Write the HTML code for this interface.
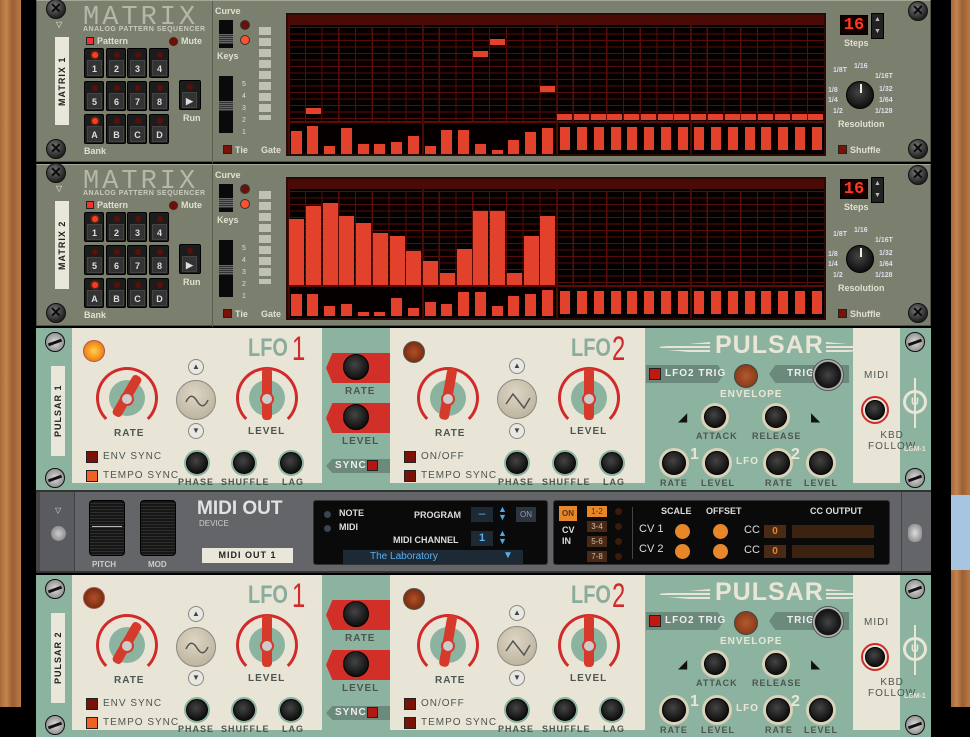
<!DOCTYPE html>
<html><head><meta charset="utf-8"><style>
*{margin:0;padding:0;box-sizing:border-box}
body{width:970px;height:707px;overflow:hidden;background:#000;font-family:"Liberation Sans",sans-serif;position:relative}
.a{position:absolute}
.wood{background:linear-gradient(90deg,#a8693a,#c3844f 30%,#9c5f33 60%,#b87a47)}
.mx{position:absolute;left:36px;width:895px;height:162px;background:#7b7f6e;border:1px solid #50534a;border-top-color:#a3a793}
.screw{position:absolute;width:20px;height:20px;border-radius:50%;background:radial-gradient(circle at 40% 35%,#777,#222 70%);border:1px solid #111}
.screw:after{content:"✕";position:absolute;left:3px;top:0;color:#0a0a0a;font-size:14px;font-weight:bold}
.sl:after{content:"";position:absolute;left:2px;top:8px;width:14px;height:3px;background:#111;transform:rotate(-20deg)}
.lbl{position:absolute;background:#e9e6da;color:#222;font-size:9px;font-weight:bold;letter-spacing:1px;writing-mode:vertical-rl;transform:rotate(180deg);text-align:center}
.t{position:absolute;color:#e0e0d0;font-weight:bold;font-size:9px;white-space:nowrap}
.btn{position:absolute;width:20px;height:30px;background:#1c1c1c;border:1px solid #000;border-radius:2px}
.btn i{position:absolute;left:7px;top:3px;width:6px;height:6px;border-radius:50%;background:#5a1008}
.btn i.on{background:#ff3a20;box-shadow:0 0 3px #f50}
.btn b{position:absolute;left:2px;top:11px;width:15px;height:16px;background:#333;color:#ddd;font-size:9px;text-align:center;line-height:16px;border:1px solid #444}
.grid{position:absolute;left:249px;top:12px;width:540px;height:143px;background:#050000;border:2px solid #2a0a08}
.knob{position:absolute;border-radius:50%;background:radial-gradient(circle at 45% 40%,#444,#111 70%);border:1px solid #000}
.pu{position:absolute;left:36px;width:895px;height:162px;background:#e9e5d6;overflow:hidden}
.gr{position:absolute;background:#8cb3a0}
.pt{position:absolute;color:#4d5550;font-size:10px;font-weight:bold;letter-spacing:1px;white-space:nowrap}
.sq{position:absolute;width:12px;height:12px;border:1px solid #222;background:#7a1208}
.lfo{position:absolute;top:6px;font-size:25px;font-weight:bold;color:#8bab9c;transform:scaleX(.8);transform-origin:left}
.num{position:absolute;top:2px;font-size:34px;color:#d02a2a;transform:scaleX(.7);transform-origin:left}
</style></head><body>
<div class="a wood" style="left:0;top:0;width:21px;height:707px"></div>
<div class="a wood" style="left:951px;top:0;width:19px;height:707px"></div>

<!-- MATRIX 1 -->
<div class="mx" id="m1" style="top:0">
 <div class="screw" style="left:9px;top:-2px"></div><div class="screw" style="left:9px;top:138px"></div>
 <div class="a" style="left:19px;top:19px;color:#eee;font-size:8px">▽</div>
 <div class="lbl" style="left:18px;top:36px;width:14px;height:88px;line-height:14px">MATRIX 1</div>
 <div class="a" style="left:175px;top:0;width:1px;height:162px;background:#5a5e50"></div>
 <div class="t" style="left:46px;top:2px;font-size:27px;letter-spacing:3px;color:#b5b8a6;font-family:'Liberation Mono',monospace;font-weight:normal">MATRIX</div>
 <div class="t" style="left:46px;top:25px;font-size:7px;color:#c9cbbd;letter-spacing:.5px">ANALOG PATTERN SEQUENCER</div>
 <div class="sq" style="left:49px;top:36px;width:8px;height:8px;background:#e33"></div>
 <div class="t" style="left:60px;top:35px">Pattern</div>
 <div class="a" style="left:132px;top:36px;width:9px;height:9px;border-radius:50%;background:#6a120a"></div>
 <div class="t" style="left:144px;top:35px">Mute</div>
 <div class="btn" style="left:47px;top:47px"><i class="on"></i><b>1</b></div>
 <div class="btn" style="left:69px;top:47px"><i></i><b>2</b></div>
 <div class="btn" style="left:90px;top:47px"><i></i><b>3</b></div>
 <div class="btn" style="left:112px;top:47px"><i></i><b>4</b></div>
 <div class="btn" style="left:47px;top:80px"><i></i><b>5</b></div>
 <div class="btn" style="left:69px;top:80px"><i></i><b>6</b></div>
 <div class="btn" style="left:90px;top:80px"><i></i><b>7</b></div>
 <div class="btn" style="left:112px;top:80px"><i></i><b>8</b></div>
 <div class="btn" style="left:47px;top:113px"><i class="on"></i><b>A</b></div>
 <div class="btn" style="left:69px;top:113px"><i></i><b>B</b></div>
 <div class="btn" style="left:90px;top:113px"><i></i><b>C</b></div>
 <div class="btn" style="left:112px;top:113px"><i></i><b>D</b></div>
 <div class="btn" style="left:142px;top:79px;width:22px"><i></i><b>▶</b></div>
 <div class="t" style="left:146px;top:112px">Run</div>
 <div class="t" style="left:47px;top:145px">Bank</div>
 <div class="t" style="left:178px;top:5px">Curve</div>
 <div class="a" style="left:182px;top:19px;width:14px;height:28px;background:#0a0a0a"><div class="a" style="left:0;top:14px;width:14px;height:10px;background:repeating-linear-gradient(#666 0 1px,#333 1px 2px)"></div></div>
 <div class="a" style="left:203px;top:19px;width:10px;height:10px;border-radius:50%;background:#6a120a;border:1px solid #333"></div>
 <div class="a" style="left:203px;top:34px;width:10px;height:10px;border-radius:50%;background:#ff5030;border:1px solid #333"></div>
 <div class="t" style="left:180px;top:50px">Keys</div>
 <div class="a" style="left:182px;top:75px;width:14px;height:57px;background:#0a0a0a"><div class="a" style="left:0;top:25px;width:14px;height:10px;background:repeating-linear-gradient(#666 0 1px,#333 1px 2px)"></div></div>
 <div class="a" style="left:200px;top:78px;font-size:7px;line-height:12px;color:#ddd;width:14px;text-align:center">5<br>4<br>3<br>2<br>1</div>
 <div class="a" style="left:222px;top:26px;width:12px;height:93px;background:repeating-linear-gradient(#bfc2b0 0 8px,transparent 8px 11px)"></div>
 <div class="sq" style="left:186px;top:144px;width:9px;height:9px"></div>
 <div class="t" style="left:198px;top:144px">Tie</div>
 <div class="t" style="left:224px;top:144px">Gate</div>
 <div class="grid"></div>
 <div class="a" style="left:803px;top:14px;width:28px;height:20px;background:#150000;border:1px solid #000;color:#ff3a20;font-family:'Liberation Mono',monospace;font-size:17px;font-weight:bold;text-align:center;line-height:19px">16</div>
 <div class="a" style="left:834px;top:12px;width:13px;height:26px;background:#222;border:1px solid #000;color:#bbb;font-size:7px;text-align:center;line-height:12px">▲<br>▼</div>
 <div class="t" style="left:807px;top:37px">Steps</div>
 <div class="t" style="left:796px;top:66px;font-size:7px;color:#dde">1/8T</div>
 <div class="t" style="left:817px;top:62px;font-size:7px;color:#dde">1/16</div>
 <div class="t" style="left:838px;top:72px;font-size:7px;color:#dde">1/16T</div>
 <div class="t" style="left:791px;top:86px;font-size:7px;color:#dde">1/8</div>
 <div class="t" style="left:791px;top:96px;font-size:7px;color:#dde">1/4</div>
 <div class="t" style="left:796px;top:107px;font-size:7px;color:#dde">1/2</div>
 <div class="t" style="left:842px;top:85px;font-size:7px;color:#dde">1/32</div>
 <div class="t" style="left:842px;top:96px;font-size:7px;color:#dde">1/64</div>
 <div class="t" style="left:838px;top:107px;font-size:7px;color:#dde">1/128</div>
 <div class="knob" style="left:809px;top:80px;width:28px;height:28px"><div class="a" style="left:13px;top:2px;width:2px;height:9px;background:#eed"></div></div>
 <div class="t" style="left:801px;top:118px">Resolution</div>
 <div class="sq" style="left:801px;top:144px;width:9px;height:9px"></div>
 <div class="t" style="left:813px;top:144px">Shuffle</div>
 <div class="screw" style="left:871px;top:0px"></div><div class="screw" style="left:871px;top:138px"></div>
</div>

<!-- PULSAR 1 -->
<div class="pu" id="p1" style="top:328px">
 <div class="gr" style="left:0;top:0;width:36px;height:162px"></div>
 <div class="gr" style="left:286px;top:0;width:68px;height:162px"></div>
 <div class="gr" style="left:609px;top:0;width:208px;height:162px"></div>
 <div class="gr" style="left:864px;top:0;width:31px;height:162px"></div>
 <div class="a" style="left:0;top:155px;width:895px;height:7px;background:#8cb3a0"></div>
 <div class="screw sl" style="left:9px;top:4px;background:radial-gradient(#ddd,#777)"></div>
 <div class="screw sl" style="left:9px;top:140px;background:radial-gradient(#ddd,#777)"></div>
 <div class="lbl" style="left:15px;top:38px;width:14px;height:90px;line-height:14px">PULSAR 1</div>
 <div class="a led" style="left:47px;top:12px;width:22px;height:22px;border-radius:50%;background:radial-gradient(#ffd050,#f08010 70%);border:1px solid #a55"></div>
 <div class="lfo" style="left:212px">LFO</div>
 <div class="num" style="left:256px">1</div>
 <div class="a" style="left:60px;top:39px;width:62px;height:62px;border-radius:50%;border:3px solid #d02a2a;border-bottom-color:transparent"></div>
 <div class="a" style="left:73px;top:52px;width:36px;height:36px;border-radius:50%;background:#8cb3a0"></div>
 <div class="a" style="left:86px;top:45px;width:10px;height:46px;background:#d63a2a;border-radius:4px;transform:rotate(30deg)"></div>
 <div class="a" style="left:84px;top:64px;width:14px;height:14px;border-radius:50%;background:#ccc;border:2px solid #d63a2a"></div>
 <div class="pt" style="left:78px;top:100px">RATE</div>
 <div class="a" style="left:200px;top:39px;width:62px;height:62px;border-radius:50%;border:3px solid #d02a2a;border-bottom-color:transparent"></div>
 <div class="a" style="left:213px;top:52px;width:36px;height:36px;border-radius:50%;background:#8cb3a0"></div>
 <div class="a" style="left:226px;top:40px;width:10px;height:52px;background:#d63a2a;border-radius:4px"></div>
 <div class="a" style="left:224px;top:64px;width:14px;height:14px;border-radius:50%;background:#ccc;border:2px solid #d63a2a"></div>
 <div class="pt" style="left:212px;top:98px">LEVEL</div>
 <div class="a" style="left:152px;top:31px;width:16px;height:16px;border-radius:50%;background:#e8e8e2;border:1px solid #888;font-size:8px;text-align:center;line-height:14px;color:#444">▲</div>
 <div class="a" style="left:140px;top:52px;width:40px;height:40px;border-radius:50%;background:radial-gradient(circle at 45% 35%,#ddd6c4,#b5ab95);border:1px solid #888"><svg width="40" height="40" class="a"><path d="M9 21 Q14 10 20 20 T31 19" stroke="#555" fill="none" stroke-width="1.5"/></svg></div>
 <div class="a" style="left:152px;top:95px;width:16px;height:16px;border-radius:50%;background:#e8e8e2;border:1px solid #888;font-size:8px;text-align:center;line-height:14px;color:#444">▼</div>
 <div class="sq" style="left:50px;top:123px"></div><div class="pt" style="left:67px;top:123px;font-weight:normal">ENV SYNC</div>
 <div class="sq" style="left:50px;top:142px;background:#f06020"></div><div class="pt" style="left:67px;top:142px;font-weight:normal">TEMPO SYNC</div>
 <div class="knob" style="left:150px;top:124px;width:22px;height:22px;box-shadow:0 0 0 2px #8cb3a0"></div><div class="pt" style="left:142px;top:149px;font-size:9px">PHASE</div>
 <div class="knob" style="left:197px;top:124px;width:22px;height:22px;box-shadow:0 0 0 2px #8cb3a0"></div><div class="pt" style="left:185px;top:149px;font-size:9px">SHUFFLE</div>
 <div class="knob" style="left:244px;top:124px;width:22px;height:22px;box-shadow:0 0 0 2px #8cb3a0"></div><div class="pt" style="left:246px;top:149px;font-size:9px">LAG</div>
 <div class="a" style="left:290px;top:25px;width:64px;height:30px;background:#d12f28;clip-path:polygon(10% 0,100% 0,100% 100%,10% 100%,0 50%)"></div>
 <div class="knob" style="left:307px;top:26px;width:26px;height:26px"></div>
 <div class="pt" style="left:309px;top:58px">RATE</div>
 <div class="a" style="left:290px;top:75px;width:64px;height:30px;background:#d12f28;clip-path:polygon(10% 0,100% 0,100% 100%,10% 100%,0 50%)"></div>
 <div class="knob" style="left:307px;top:76px;width:26px;height:26px"></div>
 <div class="pt" style="left:306px;top:108px">LEVEL</div>
 <div class="a" style="left:290px;top:131px;width:64px;height:14px;background:#6b8a7c;clip-path:polygon(10% 0,100% 0,100% 100%,10% 100%,0 50%)"></div>
 <div class="pt" style="left:299px;top:132px;color:#eee">SYNC</div>
 <div class="sq" style="left:331px;top:132px;width:11px;height:11px;background:#b01810"></div>
 <!-- LFO2 -->
 <div class="a" style="left:367px;top:13px;width:22px;height:22px;border-radius:50%;background:radial-gradient(#b0502a,#7a2e10 70%);border:1px solid #555"></div>
 <div class="lfo" style="left:535px">LFO</div>
 <div class="num" style="left:576px">2</div>
 <div class="a" style="left:381px;top:39px;width:62px;height:62px;border-radius:50%;border:3px solid #d02a2a;border-bottom-color:transparent"></div>
 <div class="a" style="left:394px;top:52px;width:36px;height:36px;border-radius:50%;background:#8cb3a0"></div>
 <div class="a" style="left:407px;top:40px;width:10px;height:52px;background:#d63a2a;border-radius:4px;transform:rotate(10deg)"></div>
 <div class="a" style="left:405px;top:64px;width:14px;height:14px;border-radius:50%;background:#ccc;border:2px solid #d63a2a"></div>
 <div class="pt" style="left:399px;top:100px">RATE</div>
 <div class="a" style="left:522px;top:39px;width:62px;height:62px;border-radius:50%;border:3px solid #d02a2a;border-bottom-color:transparent"></div>
 <div class="a" style="left:535px;top:52px;width:36px;height:36px;border-radius:50%;background:#8cb3a0"></div>
 <div class="a" style="left:548px;top:40px;width:10px;height:52px;background:#d63a2a;border-radius:4px"></div>
 <div class="a" style="left:546px;top:64px;width:14px;height:14px;border-radius:50%;background:#ccc;border:2px solid #d63a2a"></div>
 <div class="pt" style="left:534px;top:98px">LEVEL</div>
 <div class="a" style="left:473px;top:30px;width:16px;height:16px;border-radius:50%;background:#e8e8e2;border:1px solid #888;font-size:8px;text-align:center;line-height:14px;color:#444">▲</div>
 <div class="a" style="left:461px;top:51px;width:40px;height:40px;border-radius:50%;background:radial-gradient(circle at 45% 35%,#ddd6c4,#b5ab95);border:1px solid #888"><svg width="40" height="40" class="a"><path d="M8 24 L15 14 L26 28 L32 18" stroke="#555" fill="none" stroke-width="1.5"/></svg></div>
 <div class="a" style="left:473px;top:95px;width:16px;height:16px;border-radius:50%;background:#e8e8e2;border:1px solid #888;font-size:8px;text-align:center;line-height:14px;color:#444">▼</div>
 <div class="sq" style="left:368px;top:123px"></div><div class="pt" style="left:385px;top:123px;font-weight:normal">ON/OFF</div>
 <div class="sq" style="left:368px;top:142px"></div><div class="pt" style="left:385px;top:142px;font-weight:normal">TEMPO SYNC</div>
 <div class="knob" style="left:470px;top:124px;width:22px;height:22px;box-shadow:0 0 0 2px #8cb3a0"></div><div class="pt" style="left:462px;top:149px;font-size:9px">PHASE</div>
 <div class="knob" style="left:518px;top:124px;width:22px;height:22px;box-shadow:0 0 0 2px #8cb3a0"></div><div class="pt" style="left:506px;top:149px;font-size:9px">SHUFFLE</div>
 <div class="knob" style="left:565px;top:124px;width:22px;height:22px;box-shadow:0 0 0 2px #8cb3a0"></div><div class="pt" style="left:567px;top:149px;font-size:9px">LAG</div>
 <!-- pulsar section -->
 <div class="a" style="left:624px;top:14px;width:50px;height:12px;background:repeating-linear-gradient(#e9e5d6 0 2px,transparent 2px 4px);clip-path:polygon(0 40%,100% 0,100% 100%,0 60%)"></div>
 <div class="a" style="left:679px;top:3px;font-size:25px;font-weight:bold;color:#eae6d6;letter-spacing:1px">PULSAR</div>
 <div class="a" style="left:790px;top:14px;width:50px;height:12px;background:repeating-linear-gradient(#e9e5d6 0 2px,transparent 2px 4px);clip-path:polygon(0 0,100% 40%,100% 60%,0 100%)"></div>
 <div class="a" style="left:610px;top:37px;width:78px;height:18px;background:#6b8a7c;clip-path:polygon(0 0,92% 0,100% 50%,92% 100%,0 100%)"></div>
 <div class="sq" style="left:613px;top:40px;background:#c01a10"></div>
 <div class="pt" style="left:629px;top:40px;color:#eee">LFO2 TRIG</div>
 <div class="a" style="left:698px;top:36px;width:24px;height:24px;border-radius:50%;background:radial-gradient(#b35a30,#7a3010);border:1px solid #444"></div>
 <div class="a" style="left:733px;top:37px;width:80px;height:18px;background:#6b8a7c;clip-path:polygon(0 50%,8% 0,100% 0,100% 100%,8% 100%)"></div>
 <div class="pt" style="left:751px;top:40px;color:#eee">TRIG</div>
 <div class="a" style="left:776px;top:31px;width:32px;height:32px;border-radius:50%;background:radial-gradient(#444,#111 60%,#bbb 65%,#777);border:1px solid #555"></div>
 <div class="pt" style="left:684px;top:61px;color:#eae6d6">ENVELOPE</div>
 <div class="knob" style="left:668px;top:78px;width:22px;height:22px;box-shadow:0 0 0 3px #d9d1b8"></div><div class="pt" style="left:660px;top:103px;font-size:9px">ATTACK</div>
 <div class="knob" style="left:729px;top:78px;width:22px;height:22px;box-shadow:0 0 0 3px #d9d1b8"></div><div class="pt" style="left:716px;top:103px;font-size:9px">RELEASE</div>
 <div class="a" style="left:642px;top:82px;font-size:12px;color:#111">◢</div>
 <div class="a" style="left:775px;top:82px;font-size:12px;color:#111">◣</div>
 <div class="knob" style="left:626px;top:123px;width:24px;height:24px;box-shadow:0 0 0 3px #d9d1b8"></div><div class="pt" style="left:624px;top:150px;font-size:9px">RATE</div>
 <div class="pt" style="left:654px;top:118px;color:#eae6d6;font-size:16px">1</div>
 <div class="knob" style="left:669px;top:123px;width:24px;height:24px;box-shadow:0 0 0 3px #d9d1b8"></div><div class="pt" style="left:665px;top:150px;font-size:9px">LEVEL</div>
 <div class="pt" style="left:700px;top:128px;color:#eae6d6">LFO</div>
 <div class="knob" style="left:730px;top:123px;width:24px;height:24px;box-shadow:0 0 0 3px #d9d1b8"></div><div class="pt" style="left:729px;top:150px;font-size:9px">RATE</div>
 <div class="pt" style="left:755px;top:118px;color:#eae6d6;font-size:16px">2</div>
 <div class="knob" style="left:773px;top:123px;width:24px;height:24px;box-shadow:0 0 0 3px #d9d1b8"></div><div class="pt" style="left:768px;top:150px;font-size:9px">LEVEL</div>
 <div class="pt" style="left:828px;top:42px;font-weight:normal">MIDI</div>
 <div class="a" style="left:825px;top:68px;width:28px;height:28px;border-radius:50%;border:2px solid #d02a2a"></div>
 <div class="knob" style="left:829px;top:72px;width:20px;height:20px"></div>
 <div class="pt" style="left:832px;top:102px;font-weight:normal;line-height:11px;text-align:center">KBD<br>FOLLOW</div>
 <div class="a" style="left:867px;top:62px;width:24px;height:24px;border-radius:50%;border:3px solid #eae6d6;color:#eae6d6;font-size:11px;text-align:center;line-height:18px;font-weight:bold">U</div>
 <div class="a" style="left:878px;top:50px;width:2px;height:50px;background:#eae6d6"></div>
 <div class="pt" style="left:868px;top:118px;font-size:7px;color:#eae6d6;letter-spacing:0">LGM-1</div>
 <div class="screw sl" style="left:869px;top:4px;background:radial-gradient(#ddd,#777)"></div>
 <div class="screw sl" style="left:869px;top:140px;background:radial-gradient(#ddd,#777)"></div>
</div>

<!-- MIDI OUT -->
<div class="a" style="left:36px;top:490px;width:895px;height:83px;background:#646568;border-top:2px solid #333;border-bottom:2px solid #333">
 <div class="a" style="left:0;top:0;width:4px;height:79px;background:#444"></div>
 <div class="a" style="left:4px;top:0;width:35px;height:79px;background:#5a5b5e;border-right:1px solid #3e3f42"></div>
 <div class="a" style="left:19px;top:14px;color:#ddd;font-size:8px">▽</div>
 <div class="a" style="left:15px;top:34px;width:15px;height:15px;border-radius:50%;background:radial-gradient(#ccc,#777)"></div>
 <div class="a" style="left:53px;top:8px;width:36px;height:56px;border-radius:4px;background:repeating-linear-gradient(#161616 0 2px,#2e2e2e 2px 3px);border:1px solid #000"><div class="a" style="left:2px;top:25px;width:30px;height:1px;background:#bbb"></div></div>
 <div class="pt" style="left:56px;top:68px;color:#ccc;font-size:8px;letter-spacing:0">PITCH</div>
 <div class="a" style="left:104px;top:8px;width:36px;height:56px;border-radius:4px;background:repeating-linear-gradient(#161616 0 2px,#2e2e2e 2px 3px);border:1px solid #000"></div>
 <div class="pt" style="left:112px;top:68px;color:#ccc;font-size:8px;letter-spacing:0">MOD</div>
 <div class="a" style="left:161px;top:6px;font-size:19px;font-weight:bold;color:#e2e2e2">MIDI OUT</div>
 <div class="a" style="left:163px;top:27px;font-size:8px;color:#ccc">DEVICE</div>
 <div class="a" style="left:166px;top:56px;width:91px;height:15px;background:#e9e6da;color:#222;font-size:9px;font-weight:bold;text-align:center;line-height:15px;letter-spacing:1px">MIDI OUT 1</div>
 <div class="a" style="left:277px;top:8px;width:235px;height:65px;background:#0a0a0a;border-radius:3px;border:1px solid #333">
  <div class="a" style="left:10px;top:10px;width:7px;height:7px;border-radius:50%;background:#3a4550"></div><div class="pt" style="left:25px;top:7px;color:#ddd;font-size:9px;letter-spacing:0">NOTE</div>
  <div class="a" style="left:10px;top:24px;width:7px;height:7px;border-radius:50%;background:#3a4550"></div><div class="pt" style="left:25px;top:21px;color:#ddd;font-size:9px;letter-spacing:0">MIDI</div>
  <div class="pt" style="left:100px;top:9px;color:#ddd;font-size:9px;letter-spacing:0">PROGRAM</div>
  <div class="a" style="left:157px;top:6px;width:22px;height:15px;background:#1d2a36;color:#5ab0f0;text-align:center;font-size:12px;line-height:13px">–</div>
  <div class="a" style="left:184px;top:4px;color:#4aa8e8;font-size:9px;line-height:8px">▲<br>▼</div>
  <div class="a" style="left:202px;top:6px;width:20px;height:15px;background:#2a3540;color:#99a;font-size:8px;text-align:center;line-height:15px">ON</div>
  <div class="pt" style="left:79px;top:34px;color:#ddd;font-size:9px;letter-spacing:0">MIDI CHANNEL</div>
  <div class="a" style="left:157px;top:30px;width:22px;height:15px;background:#1d2a36;color:#5ab0f0;text-align:center;font-size:11px;line-height:15px;font-weight:bold">1</div>
  <div class="a" style="left:184px;top:28px;color:#4aa8e8;font-size:9px;line-height:8px">▲<br>▼</div>
  <div class="a" style="left:29px;top:49px;width:180px;height:14px;background:#1d2a36;color:#5ab0f0;font-size:10px;line-height:14px;padding-left:27px">The Laboratory</div>
  <div class="a" style="left:189px;top:49px;color:#5ab0f0;font-size:10px">▼</div>
 </div>
 <div class="a" style="left:517px;top:8px;width:337px;height:65px;background:#0a0a0a;border-radius:3px;border:1px solid #333">
  <div class="a" style="left:5px;top:5px;width:18px;height:15px;background:#e8862a;color:#532;font-size:8px;text-align:center;line-height:15px;font-weight:bold">ON</div>
  <div class="pt" style="left:8px;top:24px;color:#ddd;font-size:9px;line-height:11px;letter-spacing:0">CV<br>IN</div>
  <div class="a" style="left:33px;top:5px;width:20px;height:11px;background:#e8862a;color:#532;font-size:8px;text-align:center;line-height:11px">1-2</div>
  <div class="a" style="left:33px;top:20px;width:20px;height:11px;background:#4a2a14;color:#cba;font-size:8px;text-align:center;line-height:11px">3-4</div>
  <div class="a" style="left:33px;top:35px;width:20px;height:11px;background:#4a2a14;color:#cba;font-size:8px;text-align:center;line-height:11px">5-6</div>
  <div class="a" style="left:33px;top:50px;width:20px;height:11px;background:#4a2a14;color:#cba;font-size:8px;text-align:center;line-height:11px">7-8</div>
  <div class="a" style="left:61px;top:7px;width:7px;height:7px;border-radius:50%;background:#3a1c08;box-shadow:0 15px #3a1c08,0 30px #3a1c08,0 45px #3a1c08"></div>
  <div class="a" style="left:78px;top:6px;width:1px;height:52px;background:#444"></div>
  <div class="pt" style="left:107px;top:5px;color:#ddd;font-size:9px;letter-spacing:0">SCALE</div>
  <div class="pt" style="left:152px;top:5px;color:#ddd;font-size:9px;letter-spacing:0">OFFSET</div>
  <div class="pt" style="left:256px;top:5px;color:#ddd;font-size:9px;letter-spacing:0">CC OUTPUT</div>
  <div class="a" style="left:85px;top:22px;color:#ddd;font-size:11px">CV 1</div>
  <div class="a" style="left:85px;top:42px;color:#ddd;font-size:11px">CV 2</div>
  <div class="a" style="left:121px;top:23px;width:15px;height:15px;border-radius:50%;background:#e8862a"></div>
  <div class="a" style="left:121px;top:43px;width:15px;height:15px;border-radius:50%;background:#e8862a"></div>
  <div class="a" style="left:159px;top:23px;width:15px;height:15px;border-radius:50%;background:#e8862a"></div>
  <div class="a" style="left:159px;top:43px;width:15px;height:15px;border-radius:50%;background:#e8862a"></div>
  <div class="a" style="left:190px;top:23px;color:#ddd;font-size:11px">CC</div>
  <div class="a" style="left:190px;top:43px;color:#ddd;font-size:11px">CC</div>
  <div class="a" style="left:210px;top:24px;width:22px;height:13px;background:#4a2a14;color:#e8862a;font-size:10px;font-weight:bold;text-align:center;line-height:13px">0</div>
  <div class="a" style="left:210px;top:44px;width:22px;height:13px;background:#4a2a14;color:#e8862a;font-size:10px;font-weight:bold;text-align:center;line-height:13px">0</div>
  <div class="a" style="left:238px;top:24px;width:82px;height:13px;background:#3c2210"></div>
  <div class="a" style="left:238px;top:44px;width:82px;height:13px;background:#3c2210"></div>
 </div>
 <div class="a" style="left:865px;top:0;width:1px;height:79px;background:#444"></div>
 <div class="a" style="left:872px;top:32px;width:14px;height:18px;border-radius:6px;background:radial-gradient(#ddd,#777)"></div>
</div>
<div class="a" style="left:951px;top:495px;width:19px;height:75px;background:#a7c5e0"></div>

<script>
function grid(g,cfg){
 g.style.overflow='hidden';
 var s='';
 s+='<div class="a" style="left:0;top:0;width:536px;height:10px;background:#4a0a06"></div>';
 s+='<div class="a" style="left:0;top:12px;width:536px;height:'+(cfg.split-12)+'px;background-image:repeating-linear-gradient(90deg,#5a0c08 0 1px,transparent 1px 16.75px),repeating-linear-gradient(#5a0c08 0 1px,transparent 1px '+cfg.rh+'px)"></div>';
 s+='<div class="a" style="left:0;top:'+cfg.split+'px;width:536px;height:2px;background:#5a0c08"></div>';
 for(var i=0;i<4;i++)s+='<div class="a" style="left:'+(i*134)+'px;top:0;width:2px;height:143px;background:#4a0a06"></div>';
 cfg.cells.forEach(function(c){s+='<div class="a" style="left:'+(c[0]*16.75+1)+'px;top:'+c[1]+'px;width:'+(c[2]||15)+'px;height:'+c[3]+'px;background:'+(c[4]||'#e2412c')+'"></div>';});
 g.innerHTML=s;
}
grid(document.querySelector('#m1 .grid'),{split:106,rh:6.5,cells:(function(){
 var a=[[1,93,15,6],[11,36,15,6],[12,24,15,6],[15,71,15,6]];
 for(var i=16;i<32;i++)a.push([i,99,15,6]);
 var gh=[23,28,8,26,10,10,12,18,8,24,24,10,4,14,22,26];
 for(i=0;i<16;i++)a.push([i+0.1,139-gh[i],11,gh[i]]);
 for(i=16;i<32;i++)a.push([i+0.2,112,10,23]);
 return a;})()});
var m2=document.getElementById('m1').cloneNode(true);m2.id='m2';m2.style.top='164px';
m2.querySelector('.lbl').textContent='MATRIX 2';
document.body.appendChild(m2);
var tops=[40,27,24,37,44,54,57,72,82,94,70,32,32,94,57,37];
grid(m2.querySelector('.grid'),{split:106,rh:6.5,cells:(function(){
 var a=[];for(var i=0;i<16;i++)a.push([i,tops[i],15,106-tops[i]]);
 var gh=[22,22,10,12,4,4,18,8,14,12,24,24,10,20,22,26];
 for(i=0;i<16;i++)a.push([i+0.1,137-gh[i],11,gh[i]]);
 for(i=16;i<32;i++)a.push([i+0.2,112,10,23]);
 return a;})()});
var p2=document.getElementById('p1').cloneNode(true);p2.id='p2';p2.style.top='575px';
p2.querySelector('.lbl').textContent='PULSAR 2';
p2.querySelector('.led').style.background='radial-gradient(#b0502a,#7a2e10 70%)';
document.body.appendChild(p2);
</script>
</body></html>
